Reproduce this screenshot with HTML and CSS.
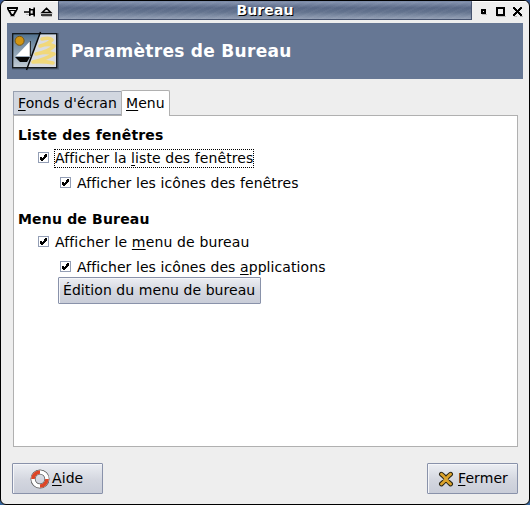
FILE: index.html
```html
<!DOCTYPE html>
<html lang="fr">
<head>
<meta charset="utf-8">
<title>Bureau</title>
<link rel="stylesheet" href="styles.css">
</head>
<body>
<div class="window">
  <div class="titlebar">
    <svg class="controls-left" width="57" height="21" viewBox="1 1 57 21">
      <path d="M10 16.5h5M42 16.5h10M26 14.5h5" stroke="#bbb" fill="none"/>
      <path d="M7 7h11v2l-4 7h-3l-4-7z"/>
      <path d="M9 9h7v1H9zM10.4 11h4.2l-1.5 3h-1.2z" fill="#eee"/>
      <path d="M24 12h6M29.8 8v8M30 9.7h3.5v4.6H30M34.2 7.5v9" fill="none" stroke="#000" stroke-width="1.6"/>
      <path d="M46.5 8.3l4.2 4.2h-8.4zM41 15h11" fill="none" stroke="#000" stroke-width="1.6"/>
    </svg>
    <div class="caption"><span>Bureau</span></div>
    <svg class="controls-right" width="57" height="21" viewBox="472 1 57 21" shape-rendering="crispEdges">
      <path fill="#bbb" d="M482 14h5v1h-5zM497 16h9v1h-9zM514 16h3v1h-3zM520 16h3v1h-3z"/>
      <path d="M481 9h5v5h-5zM496 7h9v9h-9z"/>
      <path fill="#eee" d="M483 11h1v1h-1zM498 9h5v5h-5z"/>
      <path d="M513 7h2v1h1v1h1v1h1V9h1V8h1V7h2v2h-1v1h-1v1h-1v1h1v1h1v1h1v2h-2v-1h-1v-1h-1v-1h-1v1h-1v1h-1v1h-2v-2h1v-1h1v-1h1v-1h-1v-1h-1V9h-1z"/>
    </svg>
  </div>
  <header class="banner">
    <svg class="logo" width="48" height="42" viewBox="11 30 48 42">
      <defs>
        <linearGradient id="sky" x1="0" y1="0" x2="0" y2="1"><stop offset="0" stop-color="#51718f"/><stop offset="1" stop-color="#c3ccd5"/></linearGradient>
      </defs>
      <path d="M12 68.5h46V33" fill="none" stroke="#435267" stroke-width="2" opacity=".6"/>
      <rect x="12.7" y="33.7" width="44" height="34" fill="url(#sky)" stroke="#101418" stroke-width="1.3"/>
      <path d="M40 34.4h16v32.7H27.5z" fill="#d9dbe0"/>
      <circle cx="19.6" cy="40.8" r="4.5" fill="#d39512" stroke="#795916"/>
      <path d="M30.3 41v15H16z" fill="#fff"/>
      <path d="M30.3 41v15" stroke="#111" stroke-width="1"/>
      <path d="M15 57h15l-3 5h-7z" fill="#080808"/>
      <path d="M42 39q8-2 10 1-4 4-12 6 9-3 14 0-6 6-18 8 10-3 18 0-8 5-21 8 10-1 20 1" fill="none" stroke="#f1d87b" stroke-width="3.6" stroke-linecap="round" stroke-linejoin="round"/>
      <path d="M40.5 32L26.5 70" stroke="#080808" stroke-width="1.5"/>
    </svg>
    <h1>Paramètres de Bureau</h1>
  </header>
  <main class="notebook">
    <nav class="tabs">
      <div class="tab"><span class="label"><u>F</u>onds d'écran</span></div>
      <div class="tab active"><span class="label"><u>M</u>enu</span></div>
    </nav>
    <section class="page">
      <h2>Liste des fenêtres</h2>
      <div class="option"><span class="box"><svg width="9" height="9" shape-rendering="crispEdges"><path d="M6 1h2v3H7v1H6v1H5v1H4v1H2V7H1V4h2v1h1V4h1V2h1z"/></svg></span><span class="label focused">Afficher la <u>l</u>iste des fenêtres</span></div>
      <div class="option nested"><span class="box"><svg width="9" height="9" shape-rendering="crispEdges"><path d="M6 1h2v3H7v1H6v1H5v1H4v1H2V7H1V4h2v1h1V4h1V2h1z"/></svg></span><span class="label">Afficher les icônes des fenêtres</span></div>
      <h2 class="second">Menu de Bureau</h2>
      <div class="option"><span class="box"><svg width="9" height="9" shape-rendering="crispEdges"><path d="M6 1h2v3H7v1H6v1H5v1H4v1H2V7H1V4h2v1h1V4h1V2h1z"/></svg></span><span class="label wide">Afficher le <u>m</u>enu de bureau</span></div>
      <div class="option nested"><span class="box"><svg width="9" height="9" shape-rendering="crispEdges"><path d="M6 1h2v3H7v1H6v1H5v1H4v1H2V7H1V4h2v1h1V4h1V2h1z"/></svg></span><span class="label">Afficher les icônes des <u>a</u>pplications</span></div>
      <div class="button edit"><span class="label">Édition du menu de bureau</span></div>
    </section>
  </main>
  <footer class="actions">
    <div class="button help">
      <svg width="20" height="20" viewBox="0 0 20 20">
        <circle cx="10" cy="10" r="7" fill="none" stroke="#555" stroke-width="5"/>
        <circle cx="10" cy="10" r="7" fill="none" stroke="#fff" stroke-width="3.6"/>
        <path d="M3 10A7 7 0 0 1 10 3M17 10A7 7 0 0 1 10 17" fill="none" stroke="#dc4526" stroke-width="3.6"/>
      </svg>
      <span class="label"><u>A</u>ide</span>
    </div>
    <div class="button close">
      <svg width="16" height="16" viewBox="0 0 16 16">
        <path d="M3.4 3.2Q6 5 8 8t4.6 5M12.6 3.2Q10 5 8 8t-4.6 5" fill="none" stroke="#292516" stroke-width="4.8" stroke-linecap="round"/>
        <path d="M3.4 3.2Q6 5 8 8t4.6 5M12.6 3.2Q10 5 8 8t-4.6 5" fill="none" stroke="#dba32c" stroke-width="2.8" stroke-linecap="round"/>
      </svg>
      <span class="label"><u>F</u>ermer</span>
    </div>
  </footer>
</div>
</body>
</html>
```
FILE: styles.css
```css
* { box-sizing: border-box; }
body {
  margin: 0;
  background: linear-gradient(#36568f, #36649b);
  font: 14px/17px "DejaVu Sans", sans-serif;
  color: #000;
}
.window {
  width: 530px;
  height: 505px;
  border: 1px solid #000;
  border-radius: 6px;
  background: #eee;
  display: flex;
  flex-direction: column;
  overflow: hidden;
}
.titlebar { display: flex; height: 22px; box-shadow: inset 0 1px #fff; }
.titlebar svg { flex: none; }
.caption {
  flex: 1;
  height: 19px;
  border: 1px solid #46536f;
  border-top-color: #7c8ba8;
  background:
    repeating-linear-gradient(155deg, rgba(255,255,255,.03) 0 2px, transparent 2px 5px),
    linear-gradient(#8492ae 0, #596886 35%, #64748f 60%, #95a1b6 100%);
  color: #fff;
  font-weight: bold;
  text-align: center;
  text-shadow: 1px 1px #000;
  letter-spacing: .1px;
}
.banner {
  flex: none;
  height: 56px;
  margin: 0 6px;
  padding-left: 4px;
  background: #667794;
  display: flex;
  align-items: center;
  gap: 12px;
}
h1 { margin: 0; color: #fff; font-size: 17px; line-height: 20px; letter-spacing: .29px; white-space: nowrap; }
.notebook { margin: 11px 12px 0; }
.tabs { display: flex; align-items: flex-end; height: 25px; position: relative; }
.tab {
  width: 108px;
  height: 24px;
  padding: 3px 0 0 4px;
  border: 1px solid #98a0b0;
  border-right: 0;
  background: #d2d7e0;
  white-space: nowrap;
}
.tab.active {
  width: 49px;
  height: 26px;
  margin-bottom: -1px;
  padding: 4px 0 0 4px;
  border: 1px solid #b0b0b0;
  border-bottom: 0;
  border-radius: 2px 2px 0 0;
  background: #fff;
}
.page {
  width: 505px;
  height: 332px;
  padding: 10px 4px;
  border: 1px solid #b0b0b0;
  background: #fff;
}
h2 { margin: 0 0 1px; font-size: 14px; line-height: 18px; letter-spacing: .18px; }
h2.second { margin-top: 15px; }
.option { display: flex; align-items: center; height: 25px; margin-left: 20px; gap: 6px; }
.option.nested { margin-left: 42px; }
.box {
  width: 11px;
  height: 11px;
  border: 1px solid #939eb5;
  background: #fff;
}
.box svg { display: block; }
.label { white-space: nowrap; letter-spacing: .08px; }
.label.wide { letter-spacing: .14px; }
.option .label { margin-top: 2px; }
.focused { outline: 1px dotted #000; }
u { text-decoration-thickness: 1px; text-underline-offset: 2px; text-decoration-skip-ink: none; }
.button {
  display: flex;
  align-items: center;
  border: 1px solid #8992aa;
  border-radius: 1px;
  background: linear-gradient(#eceef3, #d3d6df 55%, #c9cdd8);
  box-shadow: inset 1px 1px #f5f6f9;
}
.edit { width: 203px; height: 27px; margin: -2px 0 0 40px; padding-left: 4px; }
.edit .label { letter-spacing: .06px; }
.actions { display: flex; justify-content: space-between; margin: 16px 11px 0; }
.actions .button { height: 31px; width: 91px; }
.help { padding-left: 17px; gap: 2px; }
.close { padding-left: 10px; gap: 4px; }
```
